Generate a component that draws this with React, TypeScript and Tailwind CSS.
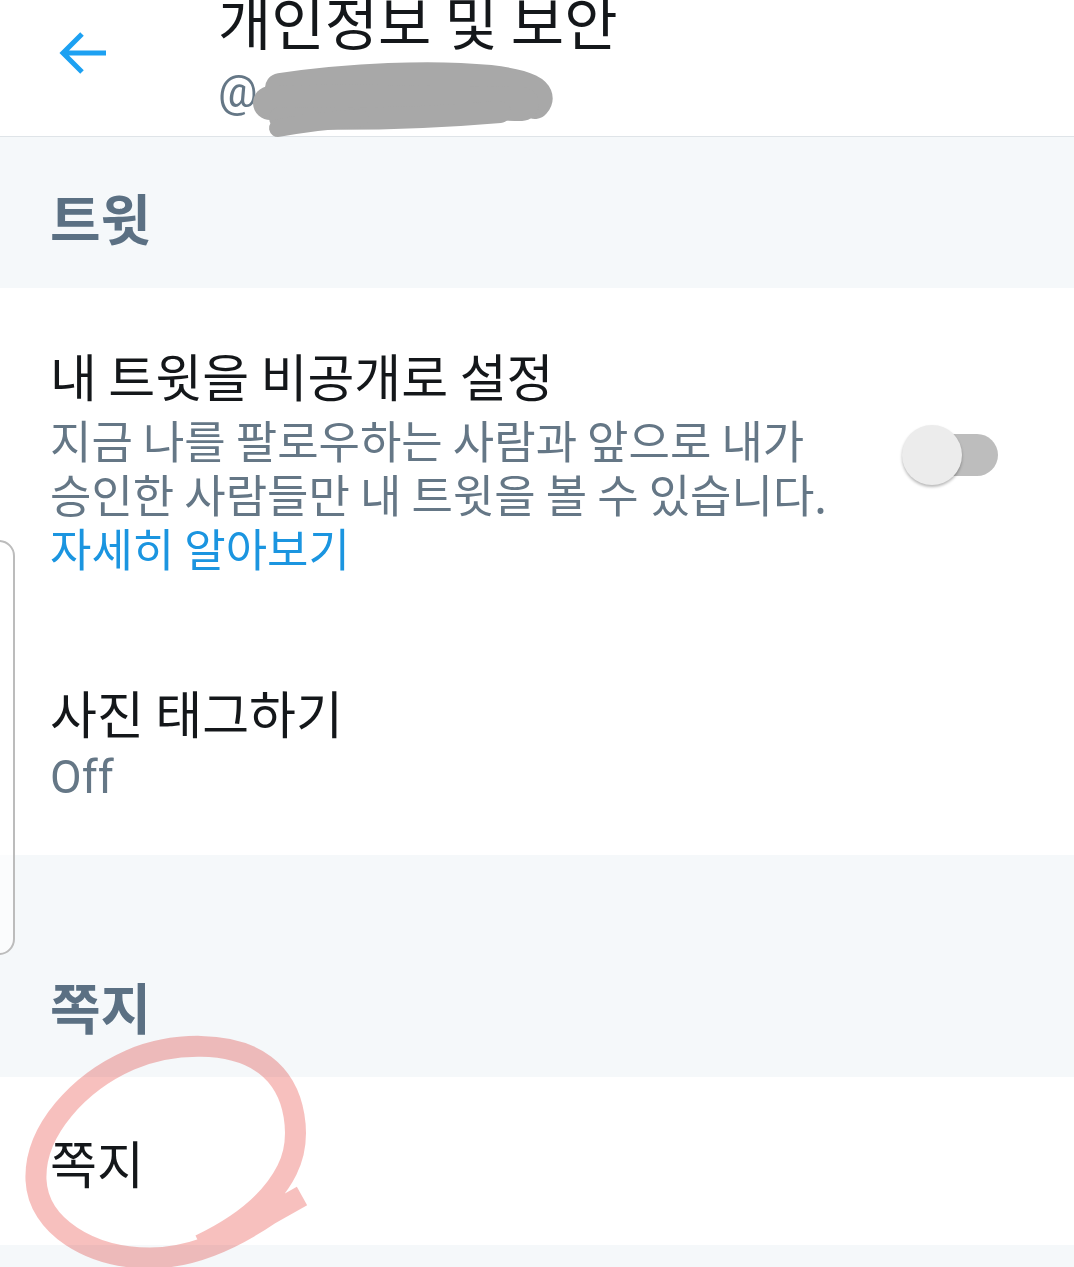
import React from "react";

const KR = { fontFamily: '"Noto Sans CJK KR", "Noto Sans", sans-serif' };
const LAT = { fontFamily: 'Roboto, "Noto Sans CJK KR", sans-serif' };

function Toggle() {
  return (
    <div className="relative w-[96px] h-[64px] shrink-0">
      <div className="absolute right-0 top-[9px] w-[86px] h-[42px] rounded-full bg-[#bdbdbd]" />
      <div className="absolute left-0 top-0 w-[60px] h-[60px] rounded-full bg-[#ececec] shadow-[0_2px_3px_rgba(0,0,0,0.28)]" />
    </div>
  );
}

export default function App() {
  return (
    <div className="relative w-[1074px] h-[1267px] overflow-hidden bg-[#f5f8fa]" style={KR}>
      {/* Header */}
      <div className="relative flex h-[137px] bg-white border-b border-[#dfe4e8]">
        <div className="w-[218px] shrink-0 pl-[58px] pt-[28px]">
          <svg width="52" height="50" viewBox="0 0 52 50" fill="none">
            <path d="M48 25 H6 M24 6 L5 25 L24 44" stroke="#1da1f2" strokeWidth="5" strokeLinecap="butt" strokeLinejoin="miter" />
          </svg>
        </div>
        <div className="flex flex-col">
          <div className="mt-[-12px] h-[64px] leading-[64px] text-[58px] text-[#14171a] whitespace-nowrap">개인정보 및 보안</div>
          <div className="mt-[12px] h-[56px] leading-[56px] text-[44px] text-[#657786]" style={LAT}>@</div>
        </div>
        <svg className="absolute left-[250px] top-[58px]" width="320" height="82" viewBox="0 0 320 82">
          <g stroke="#a8a8a8" strokeLinecap="round" strokeLinejoin="round" fill="none">
            <path d="M30 30 C 100 20, 180 16, 240 22 C 275 26, 295 34, 285 46" strokeWidth="30" />
            <path d="M20 45 C 80 42, 180 44, 272 46" strokeWidth="34" />
            <path d="M30 60 C 100 62, 180 60, 250 54" strokeWidth="22" />
            <path d="M28 70 C 50 66, 80 62, 110 60" strokeWidth="18" />
          </g>
        </svg>
      </div>

      {/* Section header 트윗 */}
      <div className="pl-[50px] pt-[47px] pb-[40px]">
        <div className="h-[64px] leading-[64px] text-[55px] font-bold text-[#5b7083]">트윗</div>
      </div>

      {/* White block */}
      <div className="bg-white">
        <div className="flex justify-between pl-[50px] pr-[76px] pt-[57px]">
          <div className="flex flex-col">
            <div className="h-[60px] leading-[60px] text-[51px] text-[#14171a] whitespace-nowrap">내 트윗을 비공개로 설정</div>
            <div className="mt-[8px] leading-[54px] text-[45px] text-[#657786] whitespace-nowrap">
              지금 나를 팔로우하는 사람과 앞으로 내가
              <br />
              승인한 사람들만 내 트윗을 볼 수 있습니다.
            </div>
            <div className="leading-[54px] text-[45px] text-[#1b95e0] whitespace-nowrap">자세히 알아보기</div>
          </div>
          <div className="mt-[80px]">
            <Toggle />
          </div>
        </div>
        <div className="pl-[50px] pt-[107px] pb-[51px]">
          <div className="h-[60px] leading-[60px] text-[51px] text-[#14171a]">사진 태그하기</div>
          <div className="mt-[8px] h-[54px] leading-[54px] text-[46px] text-[#657786]" style={LAT}>Off</div>
        </div>
      </div>

      {/* Section header 쪽지 */}
      <div className="pl-[50px] pt-[118px] pb-[40px]">
        <div className="h-[64px] leading-[64px] text-[55px] font-bold text-[#5b7083]">쪽지</div>
      </div>

      <div className="bg-white pl-[50px] pt-[55px] pb-[53px]">
        <div className="h-[60px] leading-[60px] text-[51px] text-[#14171a]">쪽지</div>
      </div>

      {/* Left edge panel handle */}
      <div className="absolute left-[-20px] top-[540px] w-[35px] h-[415px] rounded-r-[16px] border-2 border-[#bcbcbc] bg-white/60" />

      {/* Pink annotation circle */}
      <svg className="absolute left-0 top-[1020px] mix-blend-multiply pointer-events-none" width="340" height="260" viewBox="0 1020 340 260">
        <path
          d="M302 1196 L270 1214 C 232 1240, 190 1258, 150 1258 C 90 1258, 38 1226, 36 1180 C 34 1130, 80 1082, 130 1060 C 172 1042, 232 1040, 265 1065 C 298 1090, 302 1140, 287 1170 C 272 1200, 242 1225, 200 1245"
          stroke="#f6b9b7"
          strokeWidth="21"
          fill="none"
          strokeLinecap="butt"
          strokeLinejoin="round"
          opacity="0.9"
        />
      </svg>
    </div>
  );
}
